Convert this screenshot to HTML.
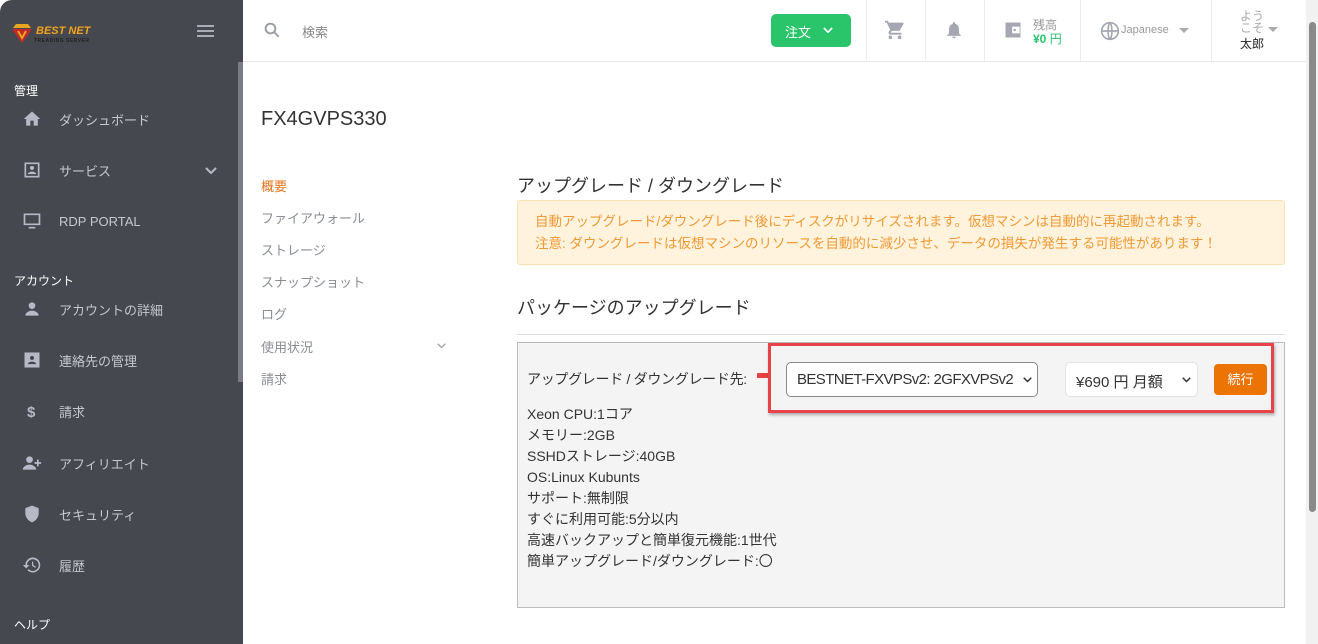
<!DOCTYPE html>
<html><head><meta charset="utf-8"><style>
*{box-sizing:border-box;margin:0;padding:0}
body{width:1318px;height:644px;overflow:hidden;background:#fff;font-family:"Liberation Sans","Noto Sans CJK JP",sans-serif;position:relative;color:#333}
#sb{position:absolute;left:0;top:0;width:243px;height:644px;background:#464850;border-top-left-radius:12px}
#sbscroll{position:absolute;left:238px;top:62px;width:5px;height:320px;background:#7a7c84}
.sec{position:absolute;left:14px;color:#fff;font-size:12px}
.it{position:absolute;left:22px;color:#c5c7cf;font-size:13px;display:flex;align-items:center}
.it svg{width:20px;height:20px;fill:#b7bac6;margin-right:17px}
#top{position:absolute;left:243px;top:0;right:12px;height:62px;border-bottom:1px solid #e8e8e8;background:#fff}
.div{position:absolute;top:0;width:1px;height:62px;background:#ececec}
#scroll{position:absolute;right:0;top:0;width:12px;height:644px;background:#f1f1f1}
#scroll div{position:absolute;left:3px;top:22px;width:7px;height:490px;background:#8a8a8a;border-radius:4px}
.nav{position:absolute;left:261px;font-size:13px;color:#8a8d96}
.spec{font-size:14px;color:#333;line-height:21px}
.chev{position:absolute;fill:none;stroke-width:2}
</style></head><body>
<div id="sb">
 <svg style="position:absolute;left:10px;top:22px" width="24" height="22" viewBox="0 0 24 22"><path d="M6 2h12l3 4H3z" fill="#e8a520"/><path d="M2 7h20l-10 14z" fill="#c2282a"/><path d="M8 9l4 7 4-7" stroke="#e8a520" stroke-width="2" fill="none"/></svg>
 <div style="position:absolute;left:36px;top:25px;color:#f3a31a;font-weight:bold;font-style:italic;font-size:11px">BEST NET</div>
 <div style="position:absolute;left:34px;top:38px;color:#222;font-weight:bold;font-size:5px;letter-spacing:.5px">TREADING SERVER</div>
 <div style="position:absolute;left:197px;top:25px;width:17px;height:2px;background:#a9acb6;box-shadow:0 5px #a9acb6,0 10px #a9acb6"></div>
 <div class="sec" style="top:82px">管理</div>
 <div class="it" style="top:109px"><svg viewBox="0 0 24 24"><path d="M10 20v-6h4v6h5v-8h3L12 3 2 12h3v8z"/></svg>ダッシュボード</div>
 <div class="it" style="top:160px"><svg viewBox="0 0 24 24"><path d="M3 3h18v18H3zM5 5v14h14V5zM12 7a2.5 2.5 0 110 5 2.5 2.5 0 010-5zM7 17c0-2 3-3 5-3s5 1 5 3z"/></svg>サービス</div>
 <svg class="chev" style="left:205px;top:167px" width="12" height="8" viewBox="0 0 12 8" stroke="#b7bac6"><path d="M1 1l5 5 5-5"/></svg>
 <div class="it" style="top:211px"><svg viewBox="0 0 24 24"><path d="M2 3h20v14H2zM4 5v10h16V5zM8 19h8v2H8z"/></svg>RDP PORTAL</div>
 <div class="sec" style="top:272px">アカウント</div>
 <div class="it" style="top:299px"><svg viewBox="0 0 24 24"><circle cx="12" cy="8" r="4"/><path d="M4 20c0-4 5-6 8-6s8 2 8 6z"/></svg>アカウントの詳細</div>
 <div class="it" style="top:350px"><svg viewBox="0 0 24 24"><path d="M3 3h18v18H3zM12 7a2.5 2.5 0 100 5 2.5 2.5 0 000-5zM7 17h10c0-2-3-3-5-3s-5 1-5 3z" fill-rule="evenodd"/></svg>連絡先の管理</div>
 <div class="it" style="top:401px"><svg viewBox="0 0 24 24"><text x="6" y="19" font-size="18" font-weight="bold" fill="#b7bac6">$</text></svg>請求</div>
 <div class="it" style="top:453px"><svg viewBox="0 0 24 24"><circle cx="9" cy="8" r="4"/><path d="M1 20c0-4 5-6 8-6s8 2 8 6zM18 8v3h-3v2h3v3h2v-3h3v-2h-3V8z"/></svg>アフィリエイト</div>
 <div class="it" style="top:504px"><svg viewBox="0 0 24 24"><path d="M12 2l8 3v6c0 5-3.5 9.5-8 11-4.5-1.5-8-6-8-11V5z"/></svg>セキュリティ</div>
 <div class="it" style="top:555px"><svg viewBox="0 0 24 24"><path d="M13 3a9 9 0 00-9 9H1l4 4 4-4H6a7 7 0 112 5l-1.4 1.4A9 9 0 1013 3zM12 8v5l4 2.5.8-1.3-3.3-2V8z"/></svg>履歴</div>
 <div class="sec" style="top:616px">ヘルプ</div>
 <div id="sbscroll"></div>
</div>
<div id="top">
 <svg style="position:absolute;left:20px;top:21px" width="18" height="18" viewBox="0 0 24 24"><circle cx="10" cy="10" r="6.5" stroke="#9a9ca4" stroke-width="2.5" fill="none"/><path d="M15 15l6 6" stroke="#9a9ca4" stroke-width="2.5"/></svg>
 <div style="position:absolute;left:59px;top:22px;font-size:13px;color:#888">検索</div>
 <div style="position:absolute;left:528px;top:14px;width:80px;height:33px;background:#2ac46b;border-radius:5px;color:#fff;font-size:13px;padding:8px 0 0 14px">注文</div>
 <svg class="chev" style="left:580px;top:27px" width="10" height="7" viewBox="0 0 12 8" stroke="#fff"><path d="M1 1l5 5 5-5"/></svg>
 <div class="div" style="left:623px"></div>
 <svg style="position:absolute;left:641px;top:19px" width="22" height="22" viewBox="0 0 24 24"><path d="M7 18a2 2 0 100 4 2 2 0 000-4zM1 2v2h2l3.6 7.6L5.2 14c-.7 1.3.2 3 1.8 3h12v-2H7.4l1.1-2h7.4c.8 0 1.4-.4 1.7-1l3.6-6.5A1 1 0 0020.4 4H5.2L4.3 2zM17 18a2 2 0 100 4 2 2 0 000-4z" fill="#a5a8b2"/></svg>
 <div class="div" style="left:682px"></div>
 <svg style="position:absolute;left:701px;top:20px" width="20" height="20" viewBox="0 0 24 24"><path d="M12 22a2 2 0 002-2h-4a2 2 0 002 2zm6-6v-5c0-3-1.6-5.6-4.5-6.3V4a1.5 1.5 0 00-3 0v.7C7.6 5.4 6 8 6 11v5l-2 2v1h16v-1z" fill="#a5a8b2"/></svg>
 <div class="div" style="left:741px"></div>
 <svg style="position:absolute;left:760px;top:20px" width="20" height="20" viewBox="0 0 24 24"><path d="M3 3h18v18H3zM11 8v8h9V8zM14 10.5a1.5 1.5 0 110 3 1.5 1.5 0 010-3z" fill="#a5a8b2" fill-rule="evenodd"/></svg>
 <div style="position:absolute;left:790px;top:16px;font-size:12px;color:#999">残高</div>
 <div style="position:absolute;left:790px;top:30px;font-size:12px;color:#2ac46b;font-weight:bold">¥0 <span style="font-weight:normal">円</span></div>
 <div class="div" style="left:837px"></div>
 <svg style="position:absolute;left:857px;top:21px" width="20" height="20" viewBox="0 0 24 24" fill="none" stroke="#a5a8b2" stroke-width="2"><circle cx="12" cy="12" r="10"/><path d="M2 12h20M12 2c3 3 3 17 0 20M12 2c-3 3-3 17 0 20"/></svg>
 <div style="position:absolute;left:878px;top:24px;font-size:11px;color:#999">Japanese</div>
 <div style="position:absolute;left:936px;top:28px;border:5px solid transparent;border-top-color:#aaa"></div>
 <div class="div" style="left:968px"></div>
 <div style="position:absolute;left:997px;top:10px;font-size:12px;color:#aaa;line-height:12px;width:24px">よう<br>こそ</div>
 <div style="position:absolute;left:997px;top:35px;font-size:12px;color:#222">太郎</div>
 <div style="position:absolute;left:1025px;top:27px;border:5px solid transparent;border-top-color:#aaa"></div>
</div>
<div id="scroll"><div></div></div>
<div style="position:absolute;left:261px;top:108px;font-size:20px;color:#333">FX4GVPS330</div>
<div class="nav" style="top:176px;color:#e5731a">概要</div>
<div class="nav" style="top:208px">ファイアウォール</div>
<div class="nav" style="top:240px">ストレージ</div>
<div class="nav" style="top:272px">スナップショット</div>
<div class="nav" style="top:304px">ログ</div>
<div class="nav" style="top:337px">使用状況</div>
<svg class="chev" style="left:437px;top:343px" width="9" height="6" viewBox="0 0 12 8" stroke="#aaa"><path d="M1 1l5 5 5-5"/></svg>
<div class="nav" style="top:369px">請求</div>
<div style="position:absolute;left:517px;top:172px;font-size:18px;color:#333">アップグレード / ダウングレード</div>
<div style="position:absolute;left:517px;top:200px;width:768px;height:65px;background:#fff3dd;border:1px solid #fbe2b5;border-radius:3px;padding:10px 17px;font-size:13.5px;color:#f09a35;line-height:22px">自動アップグレード/ダウングレード後にディスクがリサイズされます。仮想マシンは自動的に再起動されます。<br>注意: ダウングレードは仮想マシンのリソースを自動的に減少させ、データの損失が発生する可能性があります！</div>
<div style="position:absolute;left:517px;top:294px;font-size:18px;color:#333">パッケージのアップグレード</div>
<div style="position:absolute;left:517px;top:334px;width:768px;height:1px;background:#ddd"></div>
<div style="position:absolute;left:517px;top:342px;width:768px;height:266px;background:#f4f4f4;border:1px solid #bbb"></div>
<div style="position:absolute;left:527px;top:369px;font-size:14px;color:#333;white-space:nowrap;letter-spacing:-.3px">アップグレード / ダウングレード先:</div>
<div style="position:absolute;left:757px;top:373px;width:12px;height:5px;background:#e84040"></div>
<div style="position:absolute;left:768px;top:343px;width:506px;height:70px;border:3px solid #e84349;box-shadow:1px 2px 3px rgba(0,0,0,.3)"></div>
<div style="position:absolute;left:786px;top:362px;width:252px;height:35px;background:#fff;border:1px solid #888;border-radius:5px;font-size:15px;padding:8px 10px;color:#333;white-space:nowrap;overflow:hidden;letter-spacing:-.6px">BESTNET-FXVPSv2: 2GFXVPSv2</div>
<svg class="chev" style="left:1023px;top:377px" width="9" height="6" viewBox="0 0 12 8" stroke="#333"><path d="M1 1l5 5 5-5"/></svg>
<div style="position:absolute;left:1065px;top:362px;width:133px;height:35px;background:#fff;border:1px solid #e3e3e3;border-radius:5px;font-size:15px;padding:8px 10px;color:#333;white-space:nowrap">¥690 円 月額</div>
<svg class="chev" style="left:1182px;top:377px" width="9" height="6" viewBox="0 0 12 8" stroke="#333"><path d="M1 1l5 5 5-5"/></svg>
<div style="position:absolute;left:1214px;top:364px;width:53px;height:31px;background:#ec7405;border-radius:4px;color:#fff;font-size:13px;text-align:center;line-height:31px">続行</div>
<div class="spec" style="position:absolute;left:527px;top:404px">Xeon CPU:1コア<br>メモリー:2GB<br>SSHDストレージ:40GB<br>OS:Linux Kubunts<br>サポート:無制限<br>すぐに利用可能:5分以内<br>高速バックアップと簡単復元機能:1世代<br>簡単アップグレード/ダウングレード:〇</div>
</body></html>
